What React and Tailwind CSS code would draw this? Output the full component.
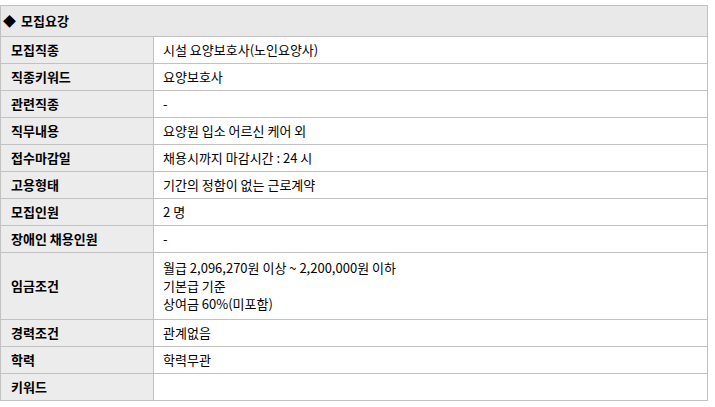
const rows = [
  { label: '모집직종', value: ['시설 요양보호사(노인요양사)'] },
  { label: '직종키워드', value: ['요양보호사'] },
  { label: '관련직종', value: ['-'] },
  { label: '직무내용', value: ['요양원 입소 어르신 케어 외'] },
  { label: '접수마감일', value: ['채용시까지 마감시간 : 24 시'] },
  { label: '고용형태', value: ['기간의 정함이 없는 근로계약'] },
  { label: '모집인원', value: ['2 명'] },
  { label: '장애인 채용인원', value: ['-'] },
  { label: '임금조건', value: ['월급 2,096,270원 이상 ~ 2,200,000원 이하', '기본급 기준', '상여금 60%(미포함)'], tall: true },
  { label: '경력조건', value: ['관계없음'] },
  { label: '학력', value: ['학력무관'] },
  { label: '키워드', value: [] },
]

export default function App() {
  return (
    <div className="w-[715px] h-[407px] bg-white pt-[5px] text-[13px] text-black" style={{ fontFamily: '"Noto Sans CJK KR", "Noto Sans", sans-serif' }}>
      <div className="w-[708px] border-x border-t border-[#c1c1c1]">
        <div className="h-[31px] flex items-center pl-[2px] bg-[#e9e9e9] border-b border-[#c1c1c1] font-bold">
          <span className="mr-[5px]">◆</span>모집요강
        </div>
        {rows.map((r) => (
          <div key={r.label} className={`flex border-b border-[#c1c1c1] ${r.tall ? 'h-[67px]' : 'h-[27px]'}`}>
            <div className="w-[153px] shrink-0 bg-[#ececec] border-r border-[#c1c1c1] flex items-center pl-[10px] font-bold">
              {r.label}
            </div>
            <div className="flex-1 flex flex-col justify-center pl-[9px] leading-[18px]">
              {r.value.map((v) => (
                <div key={v}>{v}</div>
              ))}
            </div>
          </div>
        ))}
      </div>
    </div>
  )
}
